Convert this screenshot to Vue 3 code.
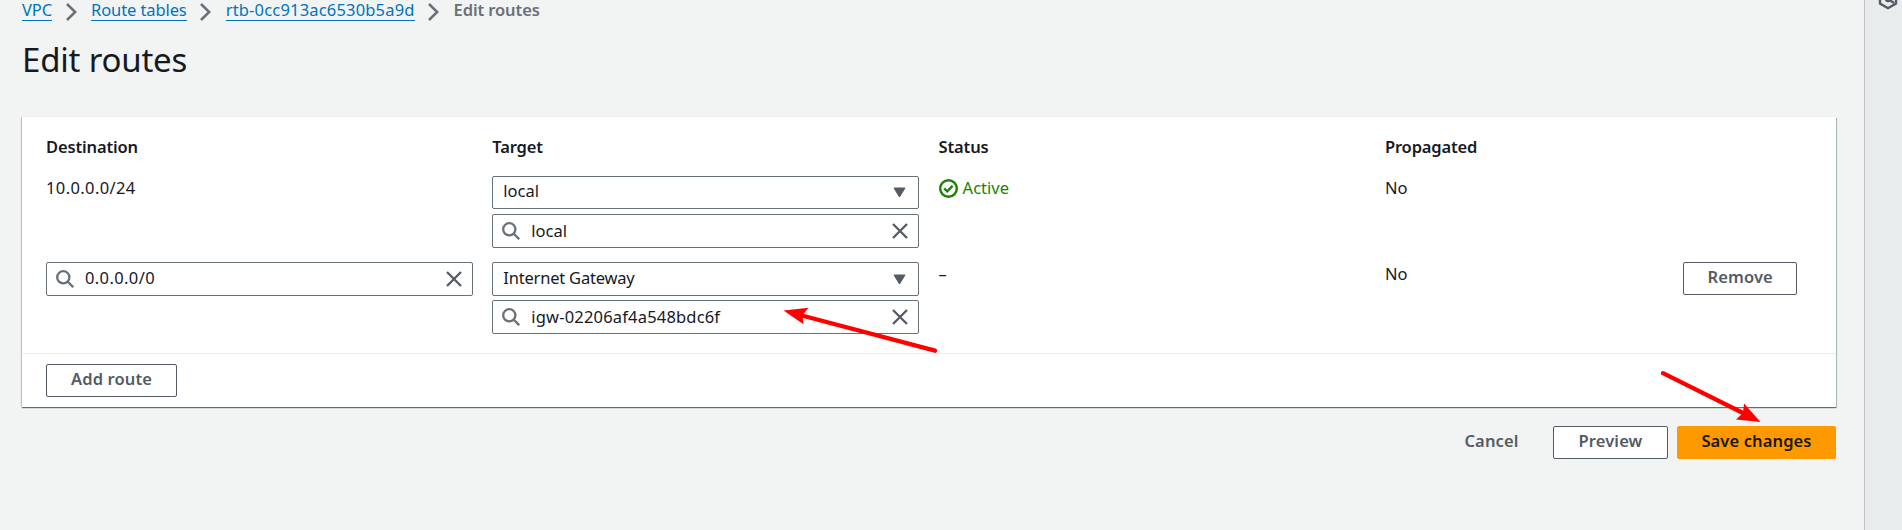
<script setup>
const crumbs = ['VPC', 'Route tables', 'rtb-0cc913ac6530b5a9d']
const headers = ['Destination', 'Target', 'Status', 'Propagated']
const routes = [
  { destination: '10.0.0.0/24', editable: false, type: 'local', target: 'local', active: true, propagated: 'No' },
  { destination: '0.0.0.0/0', editable: true, type: 'Internet Gateway', target: 'igw-02206af4a548bdc6f', active: false, propagated: 'No' },
]
const isId = (text) => text.includes('-0')
</script>

<template>
  <div class="page">
    <main class="content">
      <nav class="crumbs">
        <template v-for="c in crumbs" :key="c">
          <a class="link" :class="{ ident: isId(c) }">{{ c }}</a>
          <svg class="chevron" width="11" height="18" viewBox="0 0 11 18"><path d="M1 1l8.200 8L1 17" /></svg>
        </template>
        <span class="current">Edit routes</span>
      </nav>
      <h1>Edit routes</h1>

      <section class="card">
        <div class="grid head">
          <div v-for="h in headers" :key="h">{{ h }}</div>
        </div>
        <div v-for="r in routes" :key="r.target" class="grid row">
          <div>
            <div v-if="r.editable" class="field">
              <svg class="search" viewBox="0 0 18 18"><circle cx="7.3" cy="7.3" r="6.1" /><path d="M11.8 11.8l5.4 5.4" /></svg>
              <span class="value digits">{{ r.destination }}</span>
              <svg class="clear" viewBox="0 0 16 16"><path d="M1 1l14 14M15 1L1 15" /></svg>
            </div>
            <span v-else class="plain digits">{{ r.destination }}</span>
          </div>
          <div class="stack">
            <div class="field" :class="{ short: !r.editable }">
              <span class="value type">{{ r.type }}</span>
              <svg class="caret" viewBox="0 0 13 11"><path d="M1 1h11L6.5 10z" /></svg>
            </div>
            <div class="field">
              <svg class="search" viewBox="0 0 18 18"><circle cx="7.3" cy="7.3" r="6.1" /><path d="M11.8 11.8l5.4 5.4" /></svg>
              <span class="value target" :class="{ ident: isId(r.target) }">{{ r.target }}</span>
              <svg class="clear" viewBox="0 0 16 16"><path d="M1 1l14 14M15 1L1 15" /></svg>
            </div>
          </div>
          <div>
            <span v-if="r.active" class="plain status">
              <svg viewBox="0 0 19 19" width="19" height="19"><circle cx="9.5" cy="9.5" r="8.3" /><path d="M5.2 9.3l3 3 5.4-5.4" /></svg>
              Active
            </span>
            <span v-else class="plain">–</span>
          </div>
          <div><span class="plain">{{ r.propagated }}</span></div>
          <div><button v-if="r.editable" class="btn remove">Remove</button></div>
        </div>
        <footer><button class="btn add">Add route</button></footer>
      </section>

      <div class="actions">
        <button class="btn cancel">Cancel</button>
        <button class="btn preview">Preview</button>
        <button class="btn save">Save changes</button>
      </div>
    </main>
    <aside class="tools">
      <svg width="20" height="22" viewBox="0 0 20 22"><path d="M10 1.8l8 4.6v9.2l-8 4.6-8-4.6V6.400z" /><path d="M10 11l6 4" /><circle cx="10" cy="11" r="2" /></svg>
    </aside>
    <svg class="arrows" width="1902" height="530" viewBox="0 0 1902 530">
      <path class="shaft" d="M935 350.700L800 315M1663 373.200L1745 414" />
      <path class="tip" d="M783.500 310.500l25-2.800-6 7.500 1 9zM1760.500 422l-16.500-18.500-1 9.500-7 6.500z" />
    </svg>
  </div>
</template>

<style>
body { margin: 0; overflow: hidden; }
</style>

<style scoped>
.page {
  position: relative;
  display: flex;
  width: 1902px;
  height: 530px;
  overflow: hidden;
  background: #f2f3f3;
  color: #16191f;
  font-family: "Noto Sans", "Open Sans", sans-serif;
  font-size: 16.5px;
  font-stretch: 88%;
  line-height: 24px;
}
.content { box-sizing: border-box; width: 1864px; padding: 0 28px 0 22px; }
.crumbs { display: flex; height: 21px; align-items: flex-start; letter-spacing: -.1px; }
.link { height: 21px; line-height: 20px; box-sizing: border-box; border-bottom: 1px solid #0073bb; color: #0073bb; white-space: nowrap; }
.ident { letter-spacing: .18px; }
.chevron { flex: none; margin: 3px 14.500px 0 13.500px; fill: none; stroke: #687078; stroke-width: 2.500; }
.current { line-height: 20px; color: #687078; font-weight: 600; white-space: nowrap; }
h1 { height: 44px; margin: 17px 0 35px; font-size: 33px; font-weight: 400; line-height: 44px; letter-spacing: -.2px; }
.card { box-sizing: border-box; height: 290px; background: #fff; box-shadow: 0 1px 1px rgba(0, 28, 36, .5), 1px 1px 1px rgba(0, 28, 36, .2), -1px 0 1px rgba(0, 28, 36, .15); }
.grid { display: grid; grid-template-columns: 427px 427px 427px 279px 114px; column-gap: 19.300px; padding: 0 24px; }
.head { height: 59px; box-sizing: border-box; padding-top: 18px; font-weight: 600; letter-spacing: -.14px; }
.row { height: 86px; }
.row + .row { height: 91px; }
.plain { display: flex; height: 24px; }
.digits { letter-spacing: .38px; }
.stack { display: flex; flex-direction: column; gap: 4px; }
.field { display: flex; box-sizing: border-box; height: 34px; padding: 0 10px 0 9px; align-items: center; border: 1px solid #687078; border-radius: 2px; }
.value { flex: 1; padding-bottom: 2px; }
.type { padding-left: 1px; letter-spacing: -.2px; }
.target { padding-bottom: 1px; }
.short { margin-bottom: 1px; height: 33px; }
.short .type { padding-bottom: 3px; letter-spacing: 0; }
.search { width: 18px; height: 18px; margin-right: 11px; fill: none; stroke: #687078; stroke-width: 2.3; }
.clear { width: 16px; height: 16px; fill: none; stroke: #545b64; stroke-width: 2.3; }
.caret { width: 13px; height: 11px; margin-right: 2px; fill: #545b64; stroke: #545b64; stroke-linejoin: round; }
.status { align-items: center; gap: 5px; color: #1d8102; }
.status svg { fill: none; stroke: #1d8102; stroke-width: 2.400; }
.btn { box-sizing: border-box; height: 33px; padding: 0 0 3px; border: 1px solid #545b64; border-radius: 2px; background: #fff; color: #545b64; font: inherit; font-stretch: 88%; font-weight: 600; letter-spacing: .12px; white-space: nowrap; }
.remove { width: 114px; }
.add { width: 131px; }
footer { box-sizing: border-box; height: 54px; padding: 10px 24px 0; border-top: 1px solid #eaeded; }
.actions { display: flex; justify-content: flex-end; margin-top: 19px; }
.cancel { width: 103px; margin-right: 10px; border-color: transparent; background: none; }
.preview { width: 115px; margin-right: 9px; }
.save { width: 159px; border-color: #ff9900; background: #ff9900; color: #16191f; }
.tools { box-sizing: border-box; width: 38px; border-left: 1px solid #bcc3c5; background: #e8ecec; }
.tools svg { display: block; margin: -12px 0 0 13px; fill: none; stroke: #545b64; stroke-width: 2.400; }
.arrows { position: absolute; inset: 0; pointer-events: none; }
.shaft { fill: none; stroke: #f00; stroke-width: 4.300; stroke-linecap: round; }
.tip { fill: #f00; }
</style>
